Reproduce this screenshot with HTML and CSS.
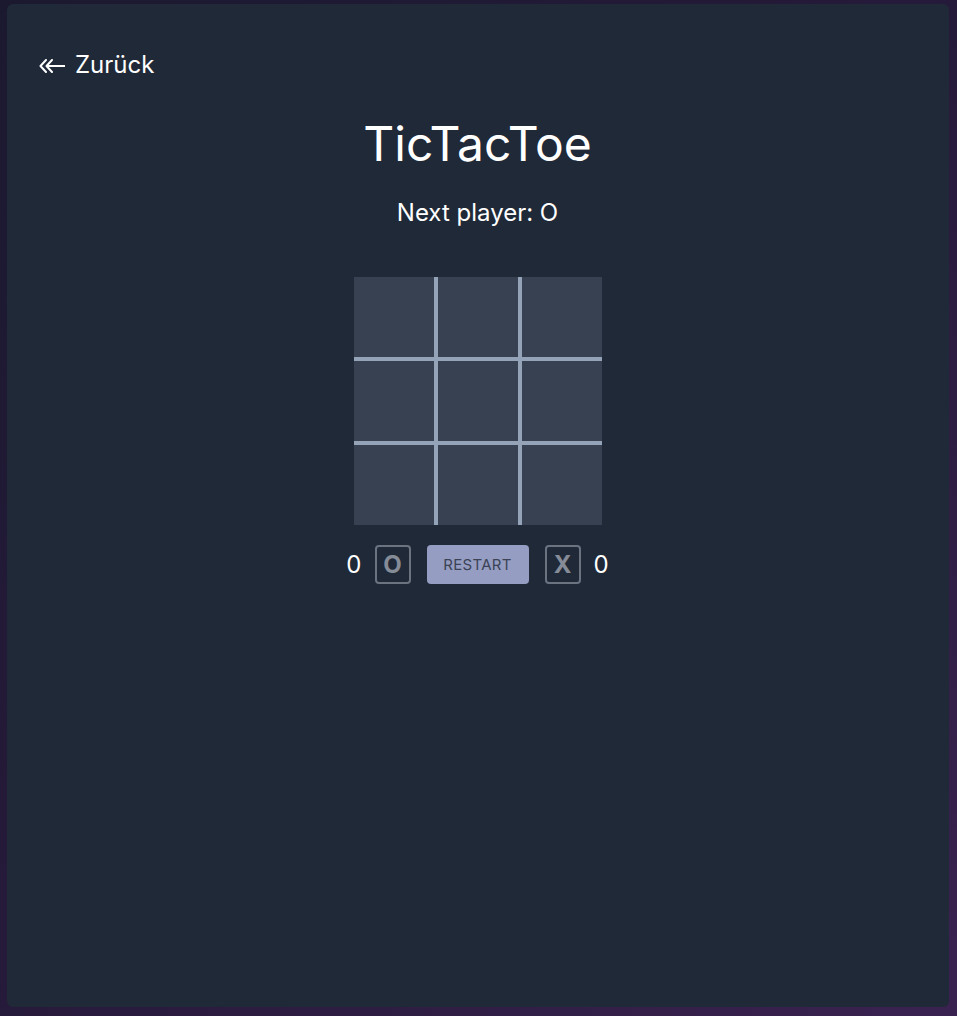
FILE: index.html
```html
<!DOCTYPE html>
<html lang="de">
<head>
    <meta charset="UTF-8">
    <meta name="viewport" content="width=device-width, initial-scale=1.0">
    <title>TicTacToe</title>
    <link rel="stylesheet" href="styles.css">
</head>
<body>
    <main class="card">
        <a class="back-link" href="#">
            <svg class="back-arrow" width="26" height="14" viewBox="0 0 26 14" fill="none" stroke="currentColor" stroke-width="2" stroke-linecap="round" stroke-linejoin="round">
                <path d="M7 1 L1.5 7 L7 13"/>
                <path d="M13 1 L7.5 7 L13 13"/>
                <path d="M8 7 H25.5"/>
            </svg>
            <span>Zurück</span>
        </a>

        <h1 class="title">TicTacToe</h1>
        <p class="status">Next player: O</p>

        <!-- Spielfeld -->
        <div class="board">
            <button class="cell"></button>
            <button class="cell"></button>
            <button class="cell"></button>
            <button class="cell"></button>
            <button class="cell"></button>
            <button class="cell"></button>
            <button class="cell"></button>
            <button class="cell"></button>
            <button class="cell"></button>
        </div>

        <div class="scores">
            <span class="score">0</span>
            <span class="player-badge">O</span>
            <button class="restart">RESTART</button>
            <span class="player-badge">X</span>
            <span class="score">0</span>
        </div>
    </main>
</body>
</html>
```

FILE: styles.css
```css
* {
    box-sizing: border-box;
}

body {
    margin: 0;
    padding: 4px 8px 9px 7px;
    min-height: 100vh;
    font-family: 'Inter', 'Noto Sans', sans-serif;
    background: linear-gradient(135deg, #1b1930 0%, #261a3a 50%, #3a2250 100%);
    color: #ffffff;
}

.card {
    min-height: calc(100vh - 13px);
    background-color: #1f2937;
    border-radius: 6px;
    padding: 45px 33px 32px 32px;
    display: flex;
    flex-direction: column;
    align-items: center;
}

.back-link {
    align-self: flex-start;
    display: flex;
    align-items: center;
    gap: 10px;
    color: #ffffff;
    text-decoration: none;
    font-size: 24px;
    line-height: 32px;
}

.back-arrow {
    display: block;
    margin-top: 1px;
}

.title {
    margin: 31px 0 0;
    font-size: 48px;
    font-weight: 400;
    line-height: 64px;
}

.status {
    margin: 21px 0 0;
    font-size: 24px;
    line-height: 32px;
}

.board {
    margin-top: 48px;
    display: grid;
    grid-template-columns: repeat(3, 80px);
    grid-template-rows: repeat(3, 80px);
    gap: 4px;
    background-color: #94a3b8;
}

.cell {
    border: none;
    padding: 0;
    background-color: #374151;
    cursor: pointer;
}

.scores {
    margin-top: 20px;
    display: flex;
    align-items: center;
    gap: 16px;
}

.score {
    font-size: 24px;
    line-height: 32px;
}

.score:first-child {
    margin-right: -3px;
}

.score:last-child {
    margin-left: -3px;
}

.player-badge {
    width: 36px;
    height: 39px;
    display: flex;
    align-items: center;
    justify-content: center;
    border: 2px solid #6b7280;
    border-radius: 4px;
    color: #868c97;
    font-size: 24px;
    font-weight: 700;
}

.restart {
    width: 102px;
    height: 39px;
    border: none;
    border-radius: 4px;
    background-color: #959dc2;
    color: #3c4356;
    font-family: inherit;
    font-size: 15px;
    letter-spacing: 0.3px;
}
```
